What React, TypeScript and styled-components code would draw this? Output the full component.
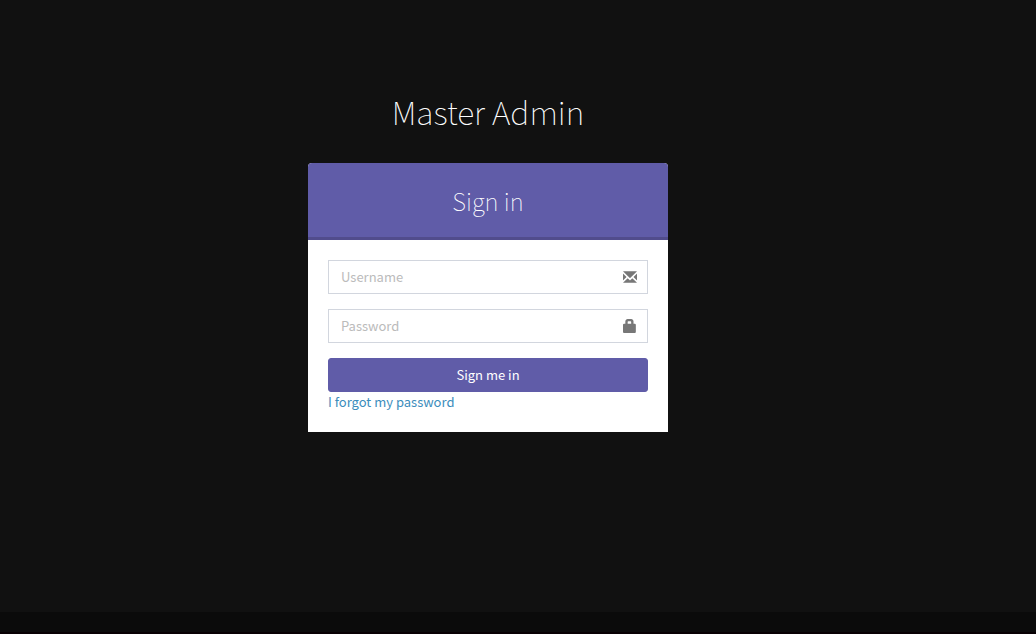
import React from "react";
import styled, { createGlobalStyle } from "styled-components";

const GlobalStyle = createGlobalStyle`
  *, *::before, *::after { box-sizing: border-box; }
  html, body, #root { height: 100%; }
  body {
    margin: 0;
    background: #111111;
    color: #333333;
    font-family: "Source Sans Pro", "Noto Sans CJK SC", sans-serif;
    font-size: 13px;
    line-height: 20px;
  }
`;

const Page = styled.div`
  display: flex;
  flex-direction: column;
  min-height: 100%;
`;

const Main = styled.main`
  flex: 1;
  display: flex;
  flex-direction: column;
  align-items: center;
  padding: 86px 60px 20px 0;
`;

const Logo = styled.h1`
  margin: 0 0 27px;
  color: #ffffff;
  font-size: 32px;
  font-weight: 100;
  line-height: 50px;
`;

const Card = styled.section`
  width: 100%;
  max-width: 360px;
  overflow: hidden;
  border-radius: 4px 4px 0 0;
  background: #ffffff;
`;

const CardHeader = styled.h2`
  margin: 0;
  padding: 23px 10px 21px;
  border-bottom: 3px solid #514c8c;
  background: #605ca8;
  color: #ffffff;
  font-size: 24px;
  font-weight: 100;
  line-height: 30px;
  text-align: center;
`;

const Form = styled.form`
  padding: 20px;
`;

const Field = styled.label`
  position: relative;
  display: block;
  margin-bottom: 15px;
`;

const Input = styled.input`
  display: block;
  width: 100%;
  height: 34px;
  padding: 5px 42px 7px 12px;
  border: 1px solid #d2d6de;
  border-radius: 0;
  background: #ffffff;
  color: #555555;
  font: inherit;
  &::placeholder { color: #bbbbbb; opacity: 1; }
`;

const FieldIcon = styled.svg`
  position: absolute;
  top: 10px;
  right: 11px;
  width: 14px;
  height: 14px;
  fill: #777777;
`;

const Button = styled.button`
  display: block;
  width: 100%;
  height: 34px;
  border: 1px solid #605ca8;
  border-radius: 3px;
  background: #605ca8;
  color: #ffffff;
  font: inherit;
  cursor: pointer;
`;

const Link = styled.a`
  display: block;
  color: #3c8dbc;
  text-decoration: none;
`;

const Footer = styled.footer`
  height: 22px;
  border-bottom: 2px solid #080003;
  background: #0b0b0b;
`;

const ENVELOPE =
  "M25 1100h1150q10 0 12.5 -5t-5.5 -13l-564 -567q-8 -8 -18 -8t-18 8l-564 567q-8 8 -5.5 13t12.5 5zM18 882l264 -264q8 -8 8 -18t-8 -18l-264 -264q-8 -8 -13 -5.5t-5 12.5v550q0 10 5 12.5t13 -5.5zM918 618l264 264q8 8 13 5.5t5 -12.5v-550q0 -10 -5 -12.5t-13 5.5l-264 264q-8 8 -8 18t8 18zM818 482l364 -364q8 -8 5.5 -13t-12.5 -5h-1150q-10 0 -12.5 5t5.5 13l364 364q8 8 18 8t18 -8l164 -164q8 -8 18 -8t18 8l164 164q8 8 18 8t18 -8z";
const LOCK =
  "M900 800v200q0 83 -58.5 141.5t-141.5 58.5h-300q-82 0 -141 -59t-59 -141v-200h-100q-41 0 -70.5 -29.5t-29.5 -70.5v-600q0 -41 29.5 -70.5t70.5 -29.5h900q41 0 70.5 29.5t29.5 70.5v600q0 41 -29.5 70.5t-70.5 29.5h-100zM400 800v150q0 21 15 35.5t35 14.5h200q20 0 35 -14.5t15 -35.5v-150h-300z";

function Icon({ path }: { path: string }) {
  return (
    <FieldIcon viewBox="0 0 1200 1200" aria-hidden="true">
      <path d={path} transform="matrix(1 0 0 -1 0 1200)" />
    </FieldIcon>
  );
}

export default function App() {
  return (
    <Page>
      <GlobalStyle />
      <Main>
        <Logo>Master Admin</Logo>
        <Card>
          <CardHeader>Sign in</CardHeader>
          <Form onSubmit={(e) => e.preventDefault()}>
            <Field>
              <Input type="text" name="username" placeholder="Username" aria-label="Username" />
              <Icon path={ENVELOPE} />
            </Field>
            <Field>
              <Input type="password" name="password" placeholder="Password" aria-label="Password" />
              <Icon path={LOCK} />
            </Field>
            <Button type="submit">Sign me in</Button>
            <Link href="#forgot">I forgot my password</Link>
          </Form>
        </Card>
      </Main>
      <Footer />
    </Page>
  );
}
